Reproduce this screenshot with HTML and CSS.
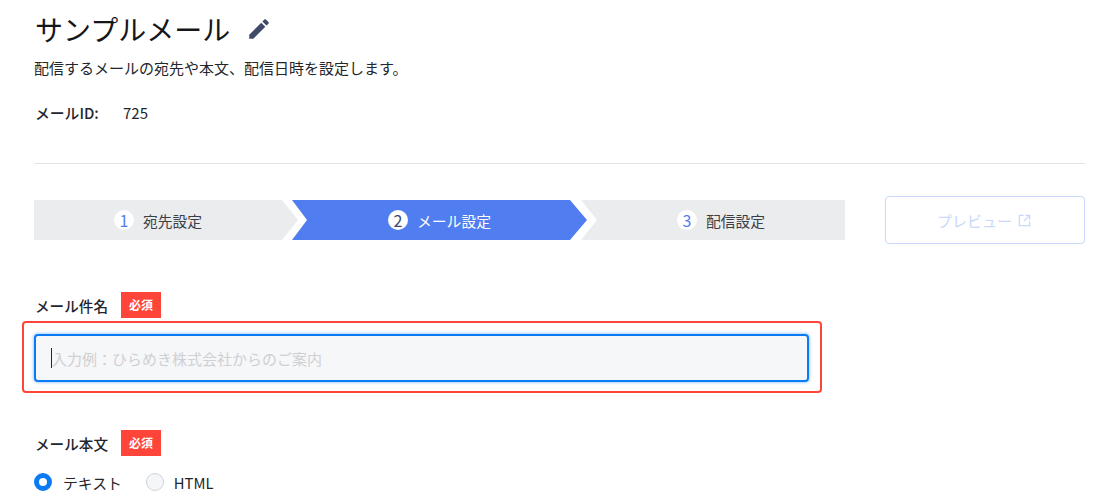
FILE: index.html
```html
<!DOCTYPE html>
<html lang="ja">
  <head>
    <meta charset="UTF-8" />
    <meta name="viewport" content="width=device-width, initial-scale=1.0" />
    <link rel="stylesheet" href="styles.css">
    <title>サンプルメール</title>
  </head>
  <body>
    <div class="page">
      <div class="title-row">
        <h1>サンプルメール</h1>
        <svg class="edit-icon" viewBox="0 0 24 24" aria-hidden="true"><path d="M3 17.25V21h3.75L17.81 9.94l-3.75-3.75L3 17.25zM20.71 7.04c.39-.39.39-1.02 0-1.41l-2.34-2.34c-.39-.39-1.02-.39-1.41 0l-1.83 1.83 3.75 3.75 1.83-1.83z"/></svg>
      </div>
      <p class="lead">配信するメールの宛先や本文、配信日時を設定します。</p>
      <div class="mail-id">
        <span class="mail-id-label">メールID:</span>
        <span>725</span>
      </div>
      <hr class="rule" />

      <div class="step-row">
        <ol class="steps">
          <li class="step step-first"><span class="step-num">1</span>宛先設定</li>
          <li class="step step-active"><span class="step-num">2</span>メール設定</li>
          <li class="step step-last"><span class="step-num">3</span>配信設定</li>
        </ol>
        <button class="preview" type="button" disabled>
          プレビュー
          <svg class="open-icon" viewBox="0 0 14 14" aria-hidden="true"><path d="M6 1.5H1.5v11h11V8M8 1.5h4.5V6M12.5 1.5 6.5 7.5"/></svg>
        </button>
      </div>

      <div class="field-label subject-label">
        <label for="subject">メール件名</label>
        <span class="required">必須</span>
      </div>
      <div class="highlight">
        <div class="subject-input" id="subject">
          <span class="caret"></span><span class="placeholder">入力例&#xFF1A;ひらめき株式会社からのご案内</span>
        </div>
      </div>

      <div class="field-label body-label">
        <label>メール本文</label>
        <span class="required">必須</span>
      </div>
      <div class="radios">
        <span class="radio radio-on"></span><span class="radio-text">テキスト</span>
        <span class="radio"></span><span class="radio-text">HTML</span>
      </div>
    </div>
  </body>
</html>
```

FILE: styles.css
```css
html,
body {
  margin: 0;
  height: 100%;
  overflow: hidden;
  background: #fff;
}
body {
  font-family: "Noto Sans CJK JP", "Noto Sans", sans-serif;
  font-size: 15px;
  color: #22252b;
}
.page {
  padding: 0 10px 0 34px;
}

.title-row {
  display: flex;
  align-items: center;
  height: 58px;
}
h1 {
  margin: 0;
  font-size: 28px;
  font-weight: 400;
  line-height: 58px;
  padding-left: 1px;
  color: #14161a;
}
.edit-icon {
  width: 26px;
  height: 26px;
  margin-left: 16px;
  margin-top: -1px;
  fill: #3f4a68;
}
.lead {
  margin: 0;
  line-height: 20px;
}
.mail-id {
  display: flex;
  margin-top: 25px;
  line-height: 20px;
  padding-left: 1px;
}
.mail-id-label {
  width: 88px;
  font-size: 14.8px;
  font-weight: 500;
}
.rule {
  margin: 40px 0 0;
  border: 0;
  border-top: 1px solid #e3e4e6;
}

.step-row {
  display: flex;
  align-items: center;
  justify-content: space-between;
  margin-top: 32px;
}
.steps {
  display: flex;
  margin: 0;
  padding: 0;
  list-style: none;
}
.step {
  display: flex;
  align-items: center;
  justify-content: center;
  height: 40px;
  background: #ebecee;
  color: #3b3f47;
  font-size: 14.8px;
}
.step + .step {
  margin-left: -6px;
}
.step-first {
  width: 264px;
  padding-right: 16px;
  box-sizing: border-box;
  clip-path: polygon(0 0, 248px 0, 100% 50%, 248px 100%, 0 100%);
}
.step-active {
  width: 295px;
  background: #507df0;
  color: #fff;
  clip-path: polygon(0 0, 278px 0, 100% 50%, 278px 100%, 0 100%, 15px 50%);
}
.step-last {
  width: 264px;
  padding-left: 16px;
  box-sizing: border-box;
  clip-path: polygon(0 0, 100% 0, 100% 100%, 0 100%, 16px 50%);
}
.step-num {
  display: inline-flex;
  align-items: center;
  justify-content: center;
  width: 20px;
  height: 20px;
  margin-right: 9px;
  border-radius: 50%;
  background: #fff;
  color: #507df0;
  font-size: 16px;
}
.step-active .step-num {
  color: #3b4a78;
}
.preview {
  display: flex;
  align-items: center;
  justify-content: center;
  gap: 6px;
  width: 200px;
  height: 48px;
  padding: 0 2px 0 0;
  border: 1px solid #c9d8fb;
  border-radius: 4px;
  background: #fff;
  color: #c9d8fb;
  font: inherit;
}
.open-icon {
  width: 13px;
  height: 13px;
  fill: none;
  stroke: #c9d8fb;
  stroke-width: 1.4;
}

.field-label {
  display: flex;
  align-items: center;
  padding-left: 1px;
  font-weight: 500;
}
.subject-label {
  margin-top: 48px;
}
.body-label {
  margin-top: 37px;
}
.field-label label {
  width: 86px;
  font-size: 14.6px;
}
.required {
  width: 40px;
  height: 26px;
  background: #ff453a;
  color: #fff;
  font-size: 12px;
  font-weight: 700;
  line-height: 26px;
  text-align: center;
}
.highlight {
  box-sizing: border-box;
  width: 800px;
  margin: 3px 0 0 -12px;
  padding: 11px 10px 9px;
  border: 2px solid #ff453a;
  border-radius: 4px;
}
.subject-input {
  display: flex;
  align-items: center;
  box-sizing: border-box;
  width: 775px;
  height: 48px;
  padding-left: 15px;
  border: 2px solid #0a7bf5;
  border-radius: 4px;
  background: #f6f7f9;
  box-shadow: 0 0 3px 1px rgba(10, 123, 245, 0.35);
}
.caret {
  width: 1px;
  height: 20px;
  background: #22252b;
}
.placeholder {
  color: #cfd0d2;
}

.radios {
  display: flex;
  align-items: center;
  margin-top: 17px;
  height: 18px;
}
.radio {
  box-sizing: border-box;
  width: 18px;
  height: 18px;
  border: 1px solid #d2d3d5;
  border-radius: 50%;
  background: #f5f6f8;
}
.radio-on {
  border: 5px solid #0a7bf5;
  background: #fff;
}
.radio-text {
  margin-left: 11px;
  margin-right: 24px;
  font-size: 14.8px;
}
.radio-text:last-child {
  margin-left: 10px;
}
```
